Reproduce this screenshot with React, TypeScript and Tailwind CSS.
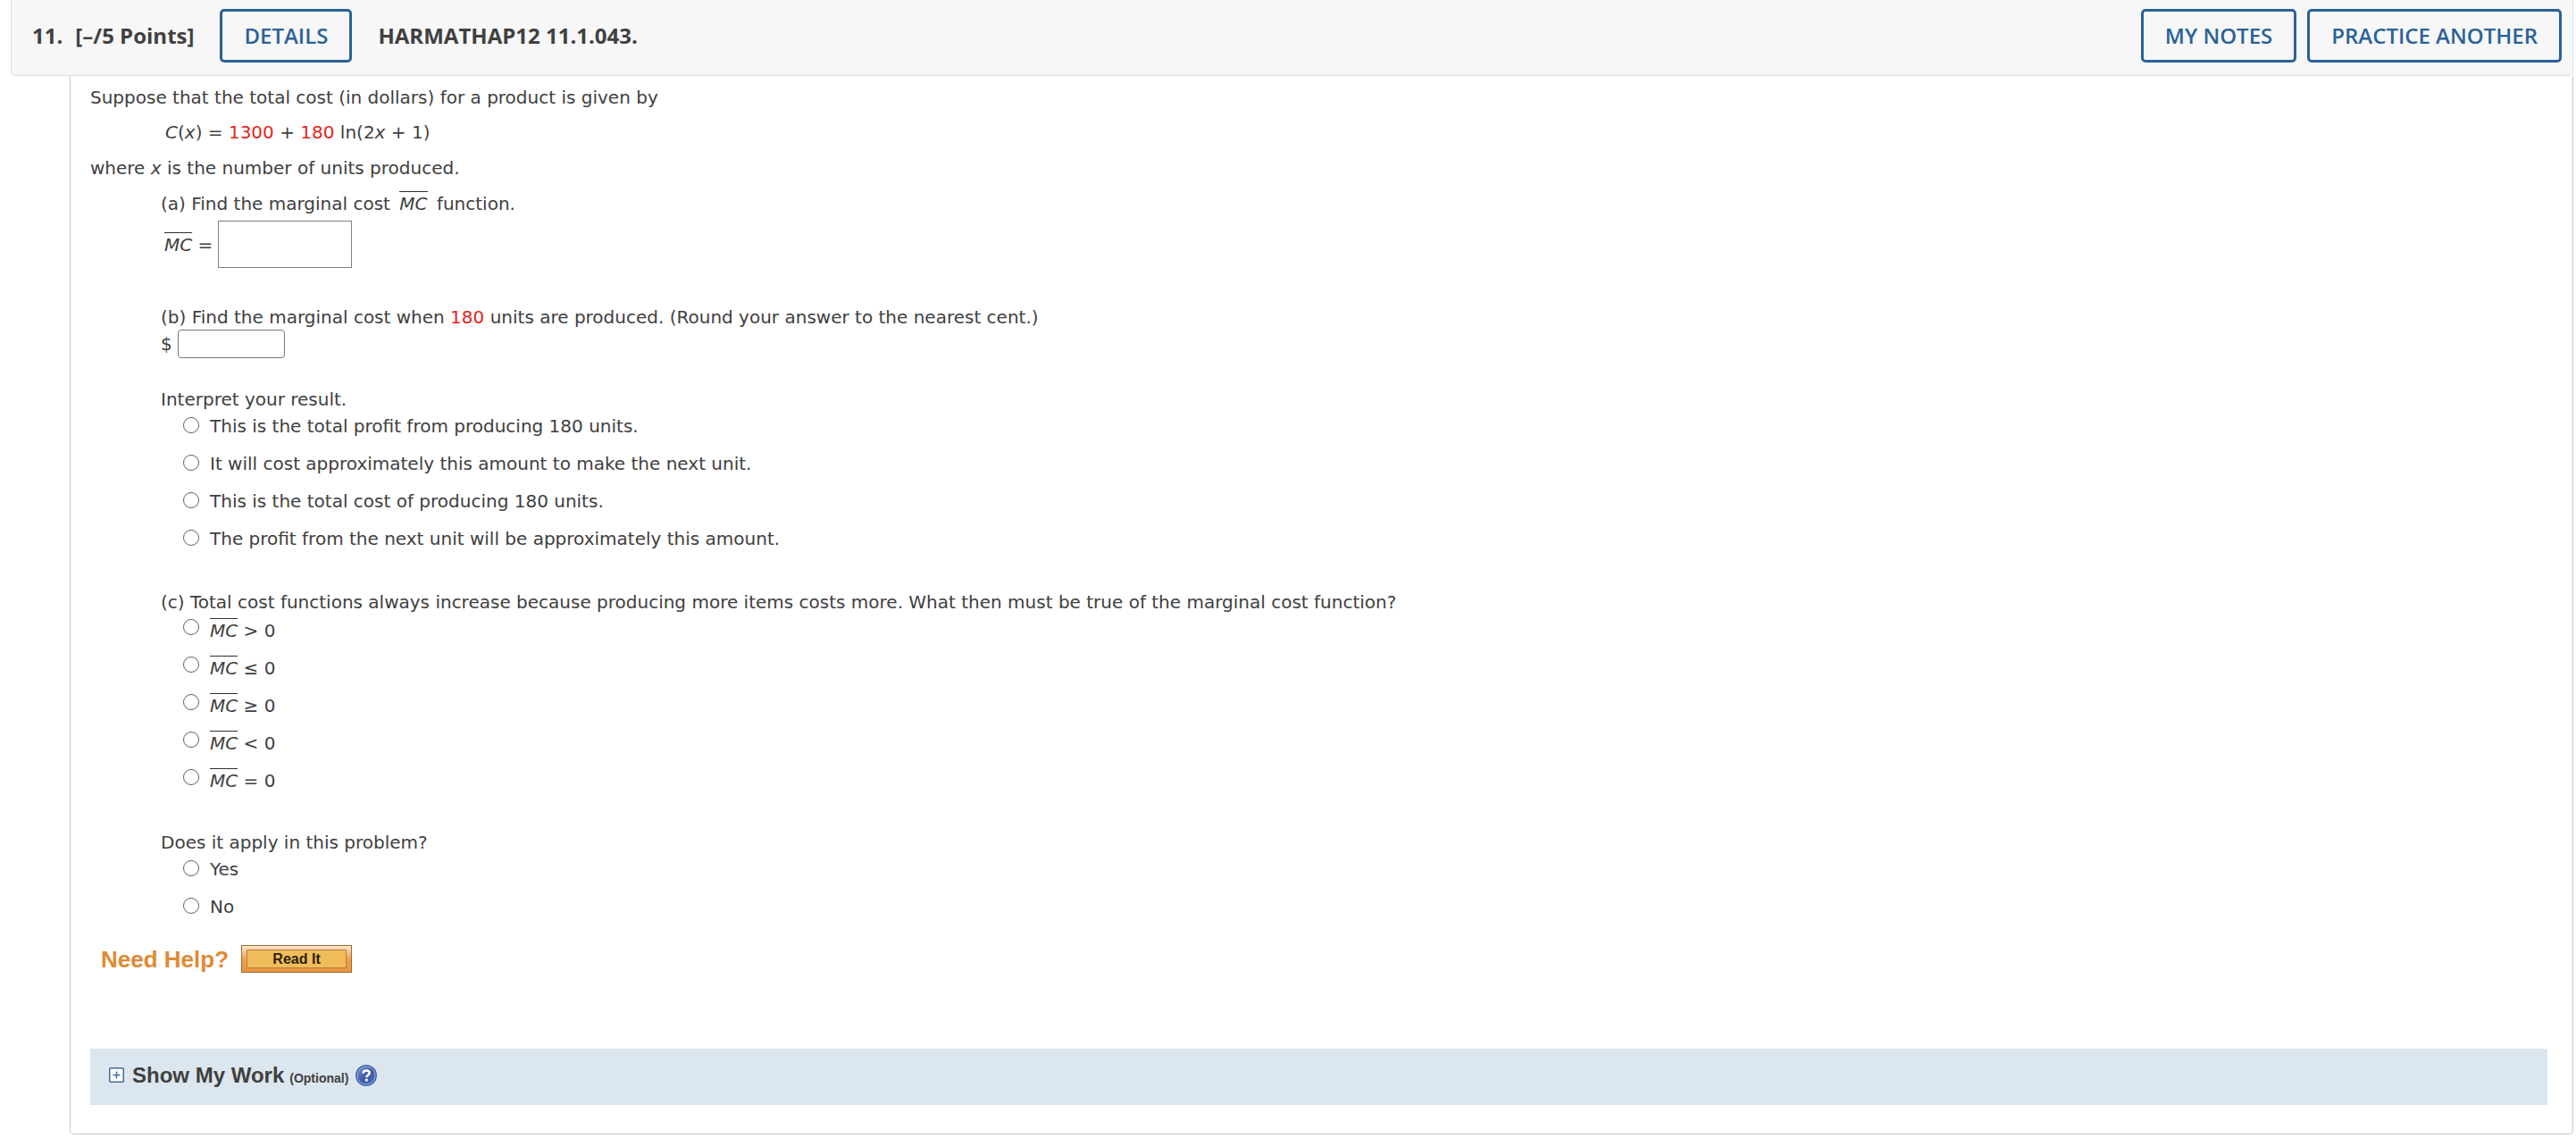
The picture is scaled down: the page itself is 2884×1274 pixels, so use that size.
import React from "react";

const interpretations = [
  "This is the total profit from producing 180 units.",
  "It will cost approximately this amount to make the next unit.",
  "This is the total cost of producing 180 units.",
  "The profit from the next unit will be approximately this amount.",
];

const relations = [">", "≤", "≥", "<", "="];

function HeaderButton({ children }: { children: React.ReactNode }) {
  return (
    <button
      type="button"
      className="h-[60px] rounded-[5px] border-[3px] border-[#2a6298] px-6 font-semibold text-[#2a6298]"
    >
      {children}
    </button>
  );
}

function MC() {
  return (
    <i className="inline-block border-t border-[#303030] pt-[3px] leading-5">MC</i>
  );
}

function Choice({
  name,
  children,
}: {
  name: string;
  children: React.ReactNode;
}) {
  return (
    <label className="flex h-[30px] items-start gap-3">
      <input
        type="radio"
        name={name}
        className="mt-[5px] size-[18px] shrink-0 appearance-none rounded-full border border-[#606060] bg-white checked:border-[5px] group-data-raised:mt-0.5"
      />
      <span>{children}</span>
    </label>
  );
}

function HelpIcon() {
  return (
    <svg viewBox="0 0 24 24" className="size-6">
      <defs>
        <linearGradient id="help-fill" x1="0" y1="0" x2="1" y2="1">
          <stop offset="0" stopColor="#7c97d2" />
          <stop offset="0.5" stopColor="#3c5ba6" />
          <stop offset="1" stopColor="#4a6cba" />
        </linearGradient>
      </defs>
      <circle cx="12" cy="12" r="12" fill="#4668ad" />
      <circle cx="12" cy="12" r="10" fill="url(#help-fill)" stroke="#a3b6df" strokeWidth="0.9" />
      <path
        d="M8.5 9.6C8.6 7.4 10 6.4 12.1 6.4C14.3 6.4 15.7 7.6 15.7 9.3C15.7 11.6 12.3 11.6 12.3 14.2"
        fill="none"
        stroke="#fff"
        strokeWidth="2.5"
      />
      <rect x="10.9" y="15.8" width="2.8" height="2.6" fill="#fff" />
    </svg>
  );
}

export default function App() {
  return (
    <main className="bg-white pr-[3px] pb-1 pl-3 font-['DejaVu_Sans',Verdana,sans-serif] text-xl leading-[30px] text-[#404040]">
      <header className="flex h-[85px] items-start rounded-b-[5px] border border-t-0 border-[#dddddd] bg-[#f7f7f7] pt-2.5 pr-3 pl-[23px] font-['Open_Sans',sans-serif] text-2xl">
        <div className="flex h-[60px] grow items-center">
          <strong>11.</strong>
          <strong className="ml-3.5">[–/5 Points]</strong>
          <span className="mx-[29px]">
            <HeaderButton>DETAILS</HeaderButton>
          </span>
          <strong>HARMATHAP12 11.1.043.</strong>
        </div>
        <div className="flex gap-3">
          <HeaderButton>MY NOTES</HeaderButton>
          <HeaderButton>PRACTICE ANOTHER</HeaderButton>
        </div>
      </header>

      <section className="ml-[66px] rounded-b-[5px] border border-t-0 border-[#c8c8c8] pr-7 pb-8 pl-[22px]">
        <p className="pt-[9px]">
          Suppose that the total cost (in dollars) for a product is given by
        </p>
        <p className="mt-[9px] pl-[84px]">
          <i>C</i>(<i>x</i>) = <span className="text-[#e8221b]">1300</span> +{" "}
          <span className="text-[#e8221b]">180</span> ln(2<i>x</i> + 1)
        </p>
        <p className="mt-[10px]">
          where <i>x</i> is the number of units produced.
        </p>

        <div className="pl-[79px]">
          <p className="mt-[10px]">
            (a) Find the marginal cost{" "}
            <span className="mx-1">
              <MC />
            </span>{" "}
            function.
          </p>
          <label className="mt-[4px] flex items-center pl-1">
            <span>
              <MC /> =
            </span>
            <input
              type="text"
              aria-label="Marginal cost function"
              className="ml-1.5 h-[53px] w-[150px] border border-[#808080] bg-white px-2"
            />
          </label>

          <p className="mt-10">
            (b) Find the marginal cost when <span className="text-[#e8221b]">180</span> units are
            produced. (Round your answer to the nearest cent.)
          </p>
          <label className="flex h-[30px] items-center">
            $
            <input
              type="text"
              aria-label="Marginal cost in dollars"
              className="ml-1.5 h-8 w-[120px] rounded-[4px] border border-[#767676] bg-white px-1"
            />
          </label>

          <fieldset className="mt-8">
            <legend>Interpret your result.</legend>
            <div className="flex flex-col items-start gap-3 pl-[25px]">
              {interpretations.map((text) => (
                <Choice key={text} name="interpret">
                  {text}
                </Choice>
              ))}
            </div>
          </fieldset>

          <fieldset className="mt-[41px]">
            <legend>
              (c) Total cost functions always increase because producing more items costs more. What
              then must be true of the marginal cost function?
            </legend>
            <div data-raised="" className="group mt-0.5 flex flex-col items-start gap-3 pl-[25px]">
              {relations.map((sign) => (
                <Choice key={sign} name="relation">
                  <MC /> {sign} 0
                </Choice>
              ))}
            </div>
          </fieldset>

          <fieldset className="mt-[39px]">
            <legend>Does it apply in this problem?</legend>
            <div className="flex flex-col items-start gap-3 pl-[25px]">
              <Choice name="applies">Yes</Choice>
              <Choice name="applies">No</Choice>
            </div>
          </fieldset>
        </div>

        <div className="mt-7 flex items-center gap-3.5 pl-3 font-['Liberation_Sans',Arial,sans-serif] font-bold">
          <span className="text-[26px] text-[#e08a35]">Need Help?</span>
          <button
            type="button"
            className="h-[31px] w-[124px] border border-[#a06a30] bg-linear-to-b from-[#fbe6cf] via-[#eea04c] to-[#e89440] px-[5px] py-1 text-base text-[#2b2108]"
          >
            <span className="flex h-full items-center justify-center border border-[#b5813c] bg-[#f1bd5b] leading-none">
              Read It
            </span>
          </button>
        </div>

        <div className="mt-[85px] flex h-[63px] items-center bg-[#dce6ee] pb-1 pl-[21px] font-['Liberation_Sans',Arial,sans-serif] font-bold">
          <button type="button" className="flex items-center">
            <svg viewBox="0 0 17 17" className="size-[17px]">
              <rect x="0.75" y="0.75" width="15.5" height="15.5" rx="1" fill="#fff" stroke="#44699e" strokeWidth="1.5" />
              <path d="M4.5 8.5h8M8.5 4.5v8" stroke="#44699e" strokeWidth="1.5" />
            </svg>
            <span className="flex items-baseline gap-1.5 pl-[9px]">
              <span className="text-2xl">Show My Work</span>
              <span className="text-sm">(Optional)</span>
            </span>
          </button>
          <a href="#help" aria-label="Help" className="ml-2">
            <HelpIcon />
          </a>
        </div>
      </section>
    </main>
  );
}
